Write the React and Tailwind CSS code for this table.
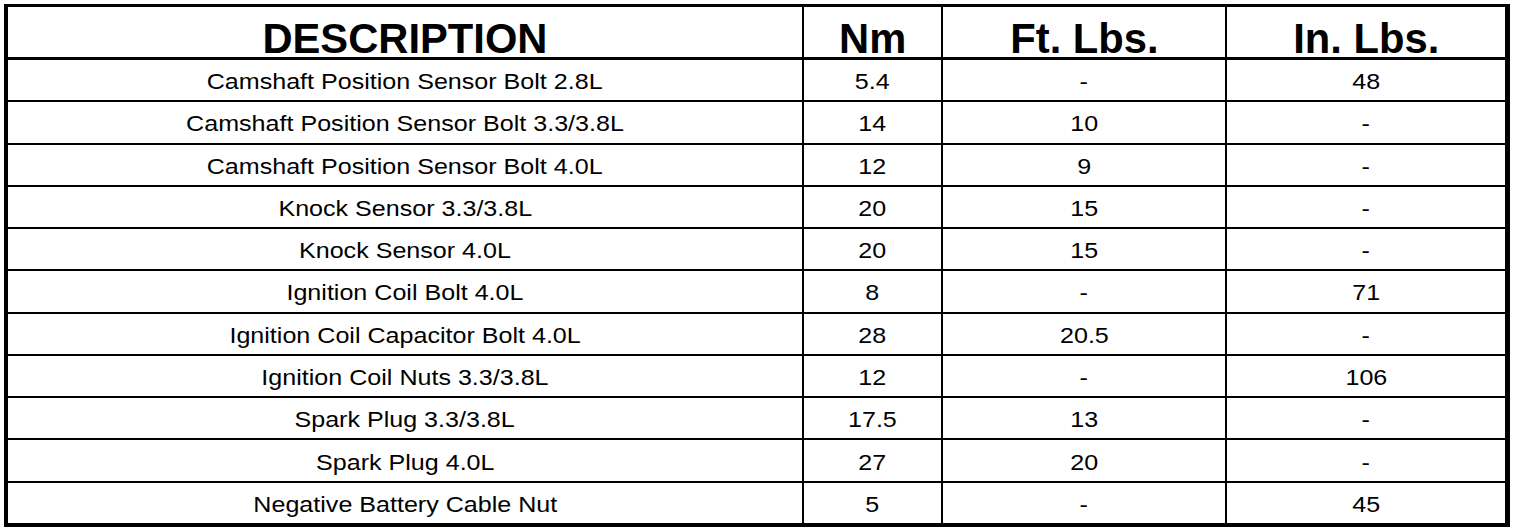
import React from 'react';

const rows = [
  ['Camshaft Position Sensor Bolt 2.8L', '5.4', '-', '48'],
  ['Camshaft Position Sensor Bolt 3.3/3.8L', '14', '10', '-'],
  ['Camshaft Position Sensor Bolt 4.0L', '12', '9', '-'],
  ['Knock Sensor 3.3/3.8L', '20', '15', '-'],
  ['Knock Sensor 4.0L', '20', '15', '-'],
  ['Ignition Coil Bolt 4.0L', '8', '-', '71'],
  ['Ignition Coil Capacitor Bolt 4.0L', '28', '20.5', '-'],
  ['Ignition Coil Nuts 3.3/3.8L', '12', '-', '106'],
  ['Spark Plug 3.3/3.8L', '17.5', '13', '-'],
  ['Spark Plug 4.0L', '27', '20', '-'],
  ['Negative Battery Cable Nut', '5', '-', '45'],
];

const cols = ['w-[796px] border-r-2', 'w-[139px] border-r-2', 'w-[284px] border-r-2', 'flex-1'];

function HeadCell({ className, children }) {
  return (
    <div className={`${className} border-black flex items-center justify-center pt-3`}>
      <span className="inline-block font-bold text-[43px] leading-none scale-x-[0.97]">{children}</span>
    </div>
  );
}

function Cell({ className, children }) {
  return (
    <div className={`${className} border-black flex items-center justify-center pt-1`}>
      <span className="inline-block text-[22px] leading-none scale-x-[1.14]">{children}</span>
    </div>
  );
}

export default function App() {
  return (
    <div className="w-[1520px] h-[532px] bg-white pt-1 pl-1 font-['Liberation_Sans',Arial,sans-serif] text-black">
      <div className="w-[1506px] h-[523px] border-black border-l-4 border-t-[3px] border-r-[5px] border-b-4 flex flex-col">
        <div className="h-[53px] flex border-b-[3px] border-black">
          <HeadCell className={cols[0]}>DESCRIPTION</HeadCell>
          <HeadCell className={cols[1]}>Nm</HeadCell>
          <HeadCell className={cols[2]}>Ft. Lbs.</HeadCell>
          <HeadCell className={cols[3]}>In. Lbs.</HeadCell>
        </div>
        {rows.map((r, i) => (
          <div
            key={i}
            className={`flex-1 flex border-black ${i < rows.length - 1 ? 'border-b-2' : ''}`}
          >
            {r.map((v, j) => (
              <Cell key={j} className={cols[j]}>{v}</Cell>
            ))}
          </div>
        ))}
      </div>
    </div>
  );
}
